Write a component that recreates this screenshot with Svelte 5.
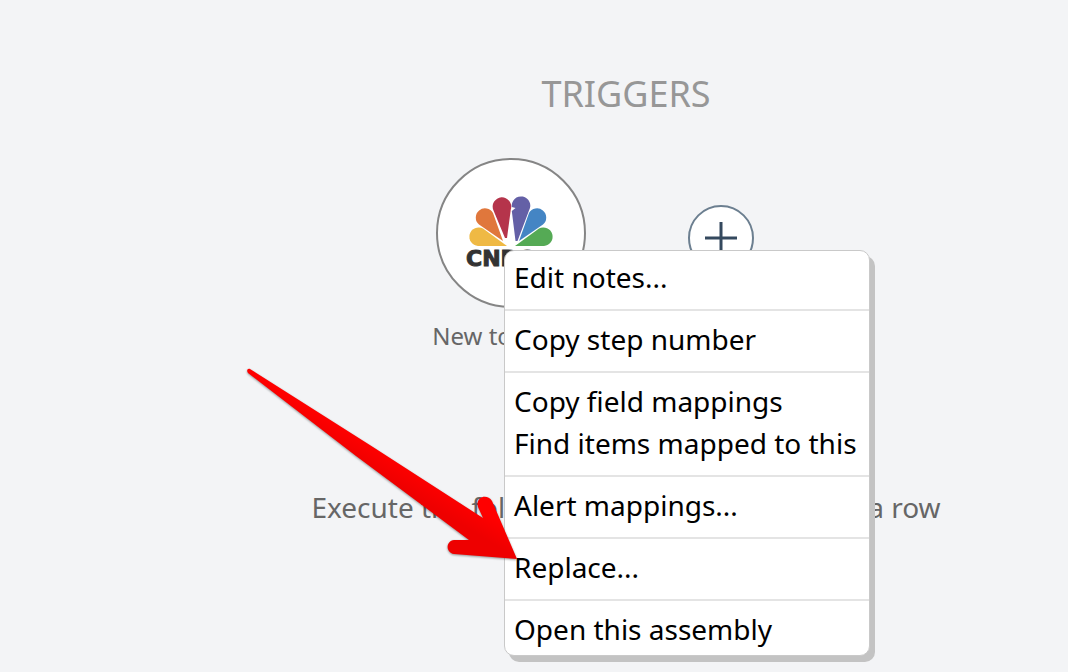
<script>
    let menu = [
        ["Edit notes..."],
        ["Copy step number"],
        ["Copy field mappings", "Find items mapped to this"],
        ["Alert mappings..."],
        ["Replace..."],
        ["Open this assembly"],
    ];
</script>

<main>
    <h1>TRIGGERS</h1>
    <div class="steps">
        <div class="step">
            <button class="step-icon" aria-label="CNBC trigger">
                <svg width="90" height="74" viewBox="0 -1 90 74">
                    <path fill="#efb944" d="M41 49H12A9.3 9.3 0 1 1 17 31.5Z" />
                    <path fill="#e0773c" d="M37 44L13 27.5A9.2 9.2 0 1 1 27 16Z" />
                    <path fill="#b5344b" d="M39 41L27.5 13.5A9.3 9.3 0 1 1 44.8 12.5L41 41Z" />
                    <path fill="#6460a6" d="M49.5 44L45.8 14L49.5 11L45.8 10A9.3 9.3 0 1 1 63 13.5L51.5 44Z" />
                    <path fill="#4485c4" d="M53 44L63 16A9.2 9.2 0 1 1 77 27.5Z" />
                    <path fill="#55aa55" d="M49 49H78A9.3 9.3 0 1 0 73 31.5Z" />
                    <text x="0" y="69">CNBC</text>
                </svg>
            </button>
            <div class="step-name">New top story</div>
            <div class="menu" role="menu">
                {#each menu as group, i}
                    {#if i > 0}
                        <hr />
                    {/if}
                    {#each group as item}
                        <button class="menu-item" role="menuitem">{item}</button>
                    {/each}
                {/each}
            </div>
        </div>
        <div class="add-slot">
            <button class="add" aria-label="Add trigger">
                <svg width="32" height="32" viewBox="0 0 32 32">
                    <path d="M16 0V32M0 16H32" stroke="#34495e" stroke-width="3" />
                </svg>
            </button>
        </div>
    </div>
    <p class="hint">Execute the following actions for every data row</p>

    <svg class="arrow" width="274" height="194" viewBox="0 0 274 194" aria-hidden="true">
        <defs>
            <linearGradient id="red" gradientUnits="userSpaceOnUse" x1="136" y1="82" x2="124" y2="102">
                <stop offset="0" stop-color="#ff0000" />
                <stop offset="1" stop-color="#ee0000" />
            </linearGradient>
        </defs>
        <path
            fill="url(#red)"
            d="M4 1L127 79L237 150L232 139C229 129 241 125 246 133L271 191L208 186C199 184 200 173 208 172L223 172L110 88L2 5C0 2 2 0 4 1Z"
        />
    </svg>
</main>

<style>
    :global(body) {
        margin: 0;
        background: #f3f4f6;
    }
    main {
        position: relative;
        box-sizing: border-box;
        min-height: 100vh;
        padding: 66px 0 0 184px;
        font-family: "Noto Sans", "Open Sans", sans-serif;
    }
    h1 {
        margin: 0 0 36px;
        font-size: 36px;
        line-height: 56px;
        font-weight: 400;
        text-align: center;
        color: #979797;
    }
    button {
        padding: 0;
        font: inherit;
        cursor: pointer;
    }
    .steps {
        display: flex;
        justify-content: center;
        gap: 30px;
    }
    .step {
        position: relative;
        width: 160px;
        display: flex;
        flex-direction: column;
        align-items: center;
    }
    .step-icon {
        width: 150px;
        height: 150px;
        display: flex;
        align-items: center;
        justify-content: center;
        background: #fff;
        border: 2px solid #858585;
        border-radius: 50%;
    }
    .step-icon text {
        font: bold 22px "DejaVu Sans", sans-serif;
        fill: #333;
        stroke: #333;
        stroke-width: 1px;
    }
    .step-name {
        margin-top: 12px;
        font-size: 24px;
        line-height: 32px;
        white-space: nowrap;
        color: #666;
    }
    .add-slot {
        width: 200px;
        padding-top: 47px;
        display: flex;
        justify-content: center;
        align-items: flex-start;
    }
    .add {
        width: 66px;
        height: 66px;
        display: flex;
        align-items: center;
        justify-content: center;
        background: #fff;
        border: 2px solid #6c7f90;
        border-radius: 50%;
    }
    .menu {
        position: absolute;
        top: 92px;
        left: 73px;
        z-index: 1;
        box-sizing: border-box;
        width: 366px;
        padding: 5px 0;
        background: #fff;
        border: 1px solid #c9c9c9;
        border-radius: 10px;
        box-shadow: 5px 6px 0 #c3c3c3;
    }
    .menu hr {
        height: 2px;
        margin: 11px 0 7px;
        border: 0;
        background: #e4e4e4;
    }
    .menu-item {
        display: block;
        width: 100%;
        padding: 0 9px;
        background: none;
        border: 0;
        font-size: 28px;
        line-height: 42px;
        text-align: left;
        white-space: nowrap;
        color: #000;
    }
    .hint {
        margin: 134px 0 0;
        font-size: 28px;
        line-height: 42px;
        text-align: center;
        color: #666;
    }
    .arrow {
        position: absolute;
        top: 368px;
        left: 246px;
        z-index: 2;
        pointer-events: none;
        filter: drop-shadow(0 1px 1px rgba(0, 0, 0, 0.4));
    }
</style>
